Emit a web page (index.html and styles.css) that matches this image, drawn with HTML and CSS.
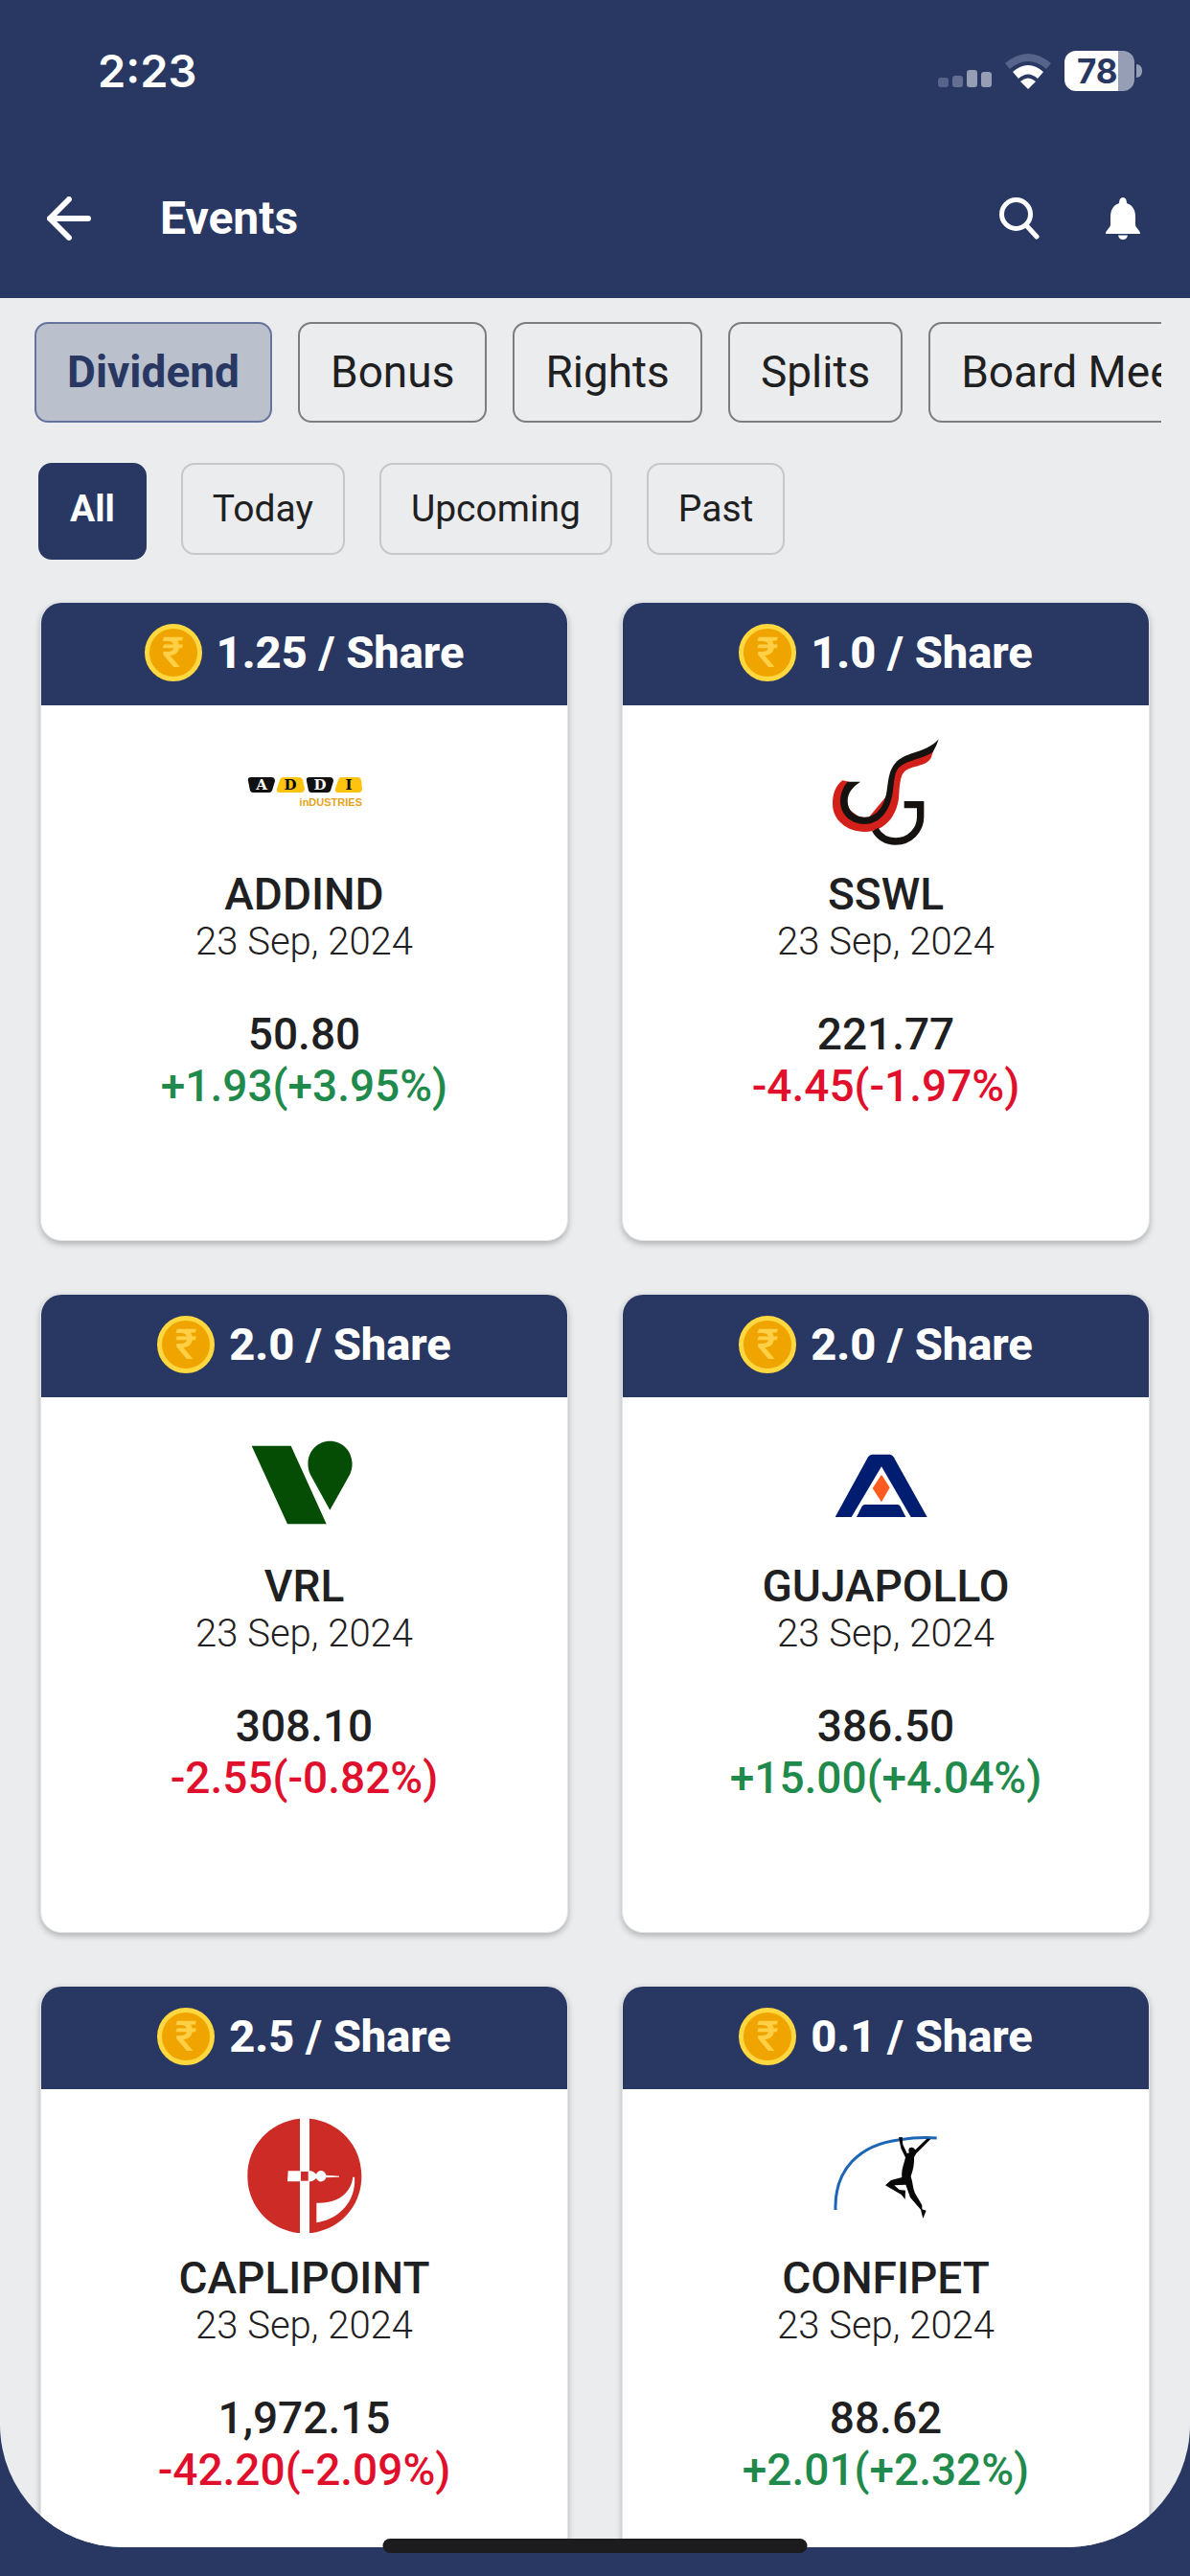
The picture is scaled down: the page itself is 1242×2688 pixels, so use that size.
FILE: index.html
```html
<!DOCTYPE html>
<html lang="en">
<head>
<meta charset="utf-8">
<meta name="viewport" content="width=device-width, initial-scale=1">
<title>Events</title>
<link rel="stylesheet" href="styles.css">
</head>
<body>
<div class="app">
  <header class="top">
    <div class="status">
      <span class="clock">2:23</span>
      <div class="indicators">
        <svg class="signal" viewBox="0 0 56 18" width="56" height="18" aria-hidden="true">
          <rect x="0" y="8" width="11" height="10" rx="3" fill="#56638a"/>
          <rect x="15" y="6" width="11" height="12" rx="3" fill="#646f92"/>
          <rect x="30" y="0" width="11" height="18" rx="3" fill="#969eb5"/>
          <rect x="45" y="2" width="11" height="16" rx="3" fill="#969eb5"/>
        </svg>
        <svg class="wifi" viewBox="0 0 48 37" width="48" height="37" aria-hidden="true">
          <path d="M0 10Q24 -10 48 10L43 16Q24 0 5 16Z" fill="#56638a"/>
          <path d="M8 19Q24 5 40 19L34 26Q24 17 14 26Z" fill="#fff"/>
          <path d="M16 29Q24 22 32 29L24 37Z" fill="#fff"/>
        </svg>
        <span class="battery"><span class="battery-level">78</span></span>
      </div>
    </div>
    <nav class="bar">
      <button class="icon-button" type="button" aria-label="Back">
        <svg viewBox="0 0 46 46" width="46" height="46"><path d="M43 23H3M23 3L3 23L23 43" fill="none" stroke="#fff" stroke-width="6" stroke-linecap="round" stroke-linejoin="round"/></svg>
      </button>
      <h1>Events</h1>
      <button class="icon-button" type="button" aria-label="Search">
        <svg viewBox="0 0 42 44" width="42" height="44"><circle cx="17.5" cy="17.5" r="15" fill="none" stroke="#fff" stroke-width="5"/><path d="M28 29L39 41" stroke="#fff" stroke-width="5" stroke-linecap="round"/></svg>
      </button>
      <button class="icon-button bell" type="button" aria-label="Notifications">
        <svg viewBox="0 0 36 44" width="36" height="44"><path d="M18 0C20.500 0 22 2 22 6C28 8 31 13 31 20V28C31 32 36 34 36 38H0C0 34 5 32 5 28V20C5 13 8 8 14 6C14 2 15.500 0 18 0ZM13 39.500H23Q22 44 18 44T13 39.500Z" fill="#fff"/></svg>
      </button>
    </nav>
  </header>

  <main class="content">
    <div class="tabs">
      <button class="tab selected" type="button">Dividend</button>
      <button class="tab" type="button">Bonus</button>
      <button class="tab" type="button">Rights</button>
      <button class="tab" type="button">Splits</button>
      <button class="tab" type="button">Board Meeting</button>
    </div>
    <div class="filters">
      <button class="filter active" type="button">All</button>
      <button class="filter" type="button">Today</button>
      <button class="filter" type="button">Upcoming</button>
      <button class="filter" type="button">Past</button>
    </div>

    <section class="grid">
      <article class="card">
        <div class="payout"><span class="coin">₹</span>1.25 / Share</div>
        <div class="details">
          <svg class="logo" viewBox="0 0 120 120" role="img" aria-label="Addi Industries">
            <path d="M4 45H25Q29 45 29 49L26 59Q25 61 23 61H6Q4 61 3 59L1 49Q0 45 4 45ZM65 45H86Q90 45 90 49L87 59Q86 61 84 61H67Q65 61 64 59L62 49Q61 45 65 45Z" fill="#111"/>
            <path d="M37 45H54Q57 45 58 48L60 57Q60 61 56 61H34Q30 61 31 57L34 48Q35 45 37 45ZM98 45H115Q118 45 119 48L120 57Q120 61 116 61H95Q91 61 92 57L95 48Q96 45 98 45Z" fill="#ffc20e"/>
            <g class="tile-letter"><text x="15" y="58" fill="#fff">A</text><text x="45" y="58">D</text><text x="76" y="58" fill="#fff">D</text><text x="106" y="58">I</text></g>
            <text class="logo-name" x="120" y="75">inDUSTRIES</text>
          </svg>
          <h2>ADDIND</h2>
          <time datetime="2024-09-23">23 Sep, 2024</time>
          <span class="price">50.80</span>
          <span class="change up">+1.93(+3.95%)</span>
        </div>
      </article>

      <article class="card">
        <div class="payout"><span class="coin">₹</span>1.0 / Share</div>
        <div class="details">
          <svg class="logo" viewBox="45 45 360 360" role="img" aria-label="SSWL">
            <path d="M88 190C66 206 57 233 57 265C57 315 103 351 158 351C218 351 256 305 264 247C267 205 268 175 282 163C303 141 346 150 365 120L372 98L280 120L240 160L225 240L160 318L92 270L108 194Z" fill="#d3201a"/>
            <path d="M104 194H144C119 211 104 229 104 255C104 284 127 305 157 305C196 305 218 270 226 228C232 190 232 158 256 133C287 100 352 104 389 61C384 76 380 86 371 101C343 121 292 125 265 149C246 169 251 208 242 244C231 292 201 327 157 327C112 327 81 295 81 256C81 230 91 209 104 194Z" fill="#15120f"/>
            <path d="M190 344C204 368 227 381 254 381C299 381 332 346 332 304V266H281" fill="none" stroke="#15120f" stroke-width="22"/>
          </svg>
          <h2>SSWL</h2>
          <time datetime="2024-09-23">23 Sep, 2024</time>
          <span class="price">221.77</span>
          <span class="change down">-4.45(-1.97%)</span>
        </div>
      </article>

      <article class="card">
        <div class="payout"><span class="coin">₹</span>2.0 / Share</div>
        <div class="details">
          <svg class="logo" viewBox="54 21 360 360" role="img" aria-label="VRL">
            <path d="M68 83H191L302 328H180ZM313 284L251 172C229 119 264 68 313 68C363 68 398 119 376 172Z" fill="#054c05"/>
          </svg>
          <h2>VRL</h2>
          <time datetime="2024-09-23">23 Sep, 2024</time>
          <span class="price">308.10</span>
          <span class="change down">-2.55(-0.82%)</span>
        </div>
      </article>

      <article class="card">
        <div class="payout"><span class="coin">₹</span>2.0 / Share</div>
        <div class="details">
          <svg class="logo" viewBox="45 -9 360 360" role="img" aria-label="Gujarat Apollo">
            <path d="M65 276L168 88Q173 80 181 80H236Q243 80 248 88L353 276H302L210 118L116 276ZM132 276L149 242Q152 237 158 237H260Q266 237 269 242L286 276Z" fill="#001d72"/>
            <path d="M210 143L236 184L210 229L182 186Z" fill="#ff5a1f"/>
          </svg>
          <h2>GUJAPOLLO</h2>
          <time datetime="2024-09-23">23 Sep, 2024</time>
          <span class="price">386.50</span>
          <span class="change up">+15.00(+4.04%)</span>
        </div>
      </article>

      <article class="card">
        <div class="payout"><span class="coin">₹</span>2.5 / Share</div>
        <div class="details">
          <svg class="logo" viewBox="54 57 360 360" role="img" aria-label="Caplin Point">
            <path d="M219 59V418C125 408 55 335 55 239S125 69 219 59ZM249 59C343 69 412 143 412 239S343 408 249 418Z" fill="#cd2b26"/>
            <path d="M182 223H247C259 222 264 228 270 233C276 218 296 218 301 236L342 239V242L301 244C296 260 276 260 270 246C264 252 259 257 247 256H180ZM385 242H390C396 310 350 372 271 385V323C339 326 378 293 385 242Z" fill="#fff"/>
            <rect x="222" y="225" width="23" height="29" fill="#cd2b26"/>
          </svg>
          <h2>CAPLIPOINT</h2>
          <time datetime="2024-09-23">23 Sep, 2024</time>
          <span class="price">1,972.15</span>
          <span class="change down">-42.20(-2.09%)</span>
        </div>
      </article>

      <article class="card">
        <div class="payout"><span class="coin">₹</span>0.1 / Share</div>
        <div class="details">
          <svg class="logo" viewBox="45 27 360 360" role="img" aria-label="Confidence Petroleum">
            <path d="M66 315C62 190 140 110 268 95Q325 86 383 90" fill="none" stroke="#1b66b5" stroke-width="9"/>
            <path d="M264 88L275 87L277 110L290 138L297 136C292 126 297 118 305 119C313 120 314 125 316 127L352 92L364 93L319 138L312 150C313 178 307 195 302 210C309 232 308 252 318 268L337 300L337 313L350 317L340 342L333 314L300 276L286 236L250 238L266 252L285 254L284 282L272 267L222 238L240 222L274 213C271 190 281 170 285 151L271 122Z" fill="#080808"/>
          </svg>
          <h2>CONFIPET</h2>
          <time datetime="2024-09-23">23 Sep, 2024</time>
          <span class="price">88.62</span>
          <span class="change up">+2.01(+2.32%)</span>
        </div>
      </article>
    </section>
  </main>
  <div class="home-indicator"></div>
</div>
</body>
</html>
```
FILE: styles.css
```css
:root {
  --navy: #283862;
  --surface: #ebecee;
  --ink: #1f2021;
  --up: #1f8a4c;
  --down: #e0102d;
}

* { box-sizing: border-box; }

body {
  margin: 0;
  background: var(--navy);
  color: var(--ink);
  font-family: Roboto, "Liberation Sans", sans-serif;
}

button {
  margin: 0;
  font-family: inherit;
  color: inherit;
  cursor: pointer;
}

svg { display: block; }

.app {
  position: relative;
  display: flex;
  flex-direction: column;
  height: 100vh;
  padding-bottom: 30px;
}

/* Status bar and title bar */
.top { color: #fff; }

.status {
  display: flex;
  align-items: center;
  justify-content: space-between;
  height: 148px;
  padding: 0 50px 0 102px;
}

.clock {
  font: 600 47px/56px Inter, sans-serif;
}

.indicators {
  display: flex;
  align-items: center;
  gap: 14px;
}

.signal { align-self: flex-end; margin-bottom: 4px; }

.battery {
  position: relative;
  width: 73px;
  height: 42px;
  margin-right: 8px;
  border-radius: 12px;
  background: linear-gradient(90deg, #fff 77%, #969eb5 77%);
  color: var(--navy);
}

.battery::after {
  content: "";
  position: absolute;
  top: 14px;
  right: -8px;
  width: 6px;
  height: 14px;
  border-radius: 0 6px 6px 0;
  background: #969eb5;
}

.battery-level {
  display: block;
  padding-left: 13px;
  font: 700 35px/42px Inter, sans-serif;
}

.bar {
  display: flex;
  align-items: center;
  height: 163px;
  padding: 0 52px 3px 49px;
}

.bar h1 {
  flex: 1;
  margin: 0 0 0 72px;
  font-size: 48px;
  line-height: 56px;
  font-weight: 700;
}

.icon-button {
  padding: 0;
  border: 0;
  background: none;
}

.bell { margin-left: 69px; }

/* Scrolling content */
.content {
  flex: 1;
  min-height: 0;
  overflow: hidden;
  padding-top: 25px;
  border-radius: 0 0 128px 128px;
  background: var(--surface);
}

.tabs {
  display: flex;
  gap: 27px;
  margin: 0 30px 0 36px;
  overflow: hidden;
}

.tab {
  flex: none;
  height: 105px;
  padding: 0 32px 2px;
  border: 2px solid #7c7d7f;
  border-radius: 14px;
  background: none;
  font-size: 46px;
  line-height: 54px;
  white-space: nowrap;
}

.tab.selected {
  border-color: #66749b;
  background: #bbc0cd;
  color: var(--navy);
  font-weight: 700;
}

.filters {
  display: flex;
  align-items: flex-start;
  gap: 36px;
  padding: 42px 40px 44px;
}

.filter {
  padding: 24px 31px;
  border: 2px solid #c6c7c9;
  border-radius: 14px;
  background: none;
  font-size: 39px;
  line-height: 44px;
}

.filter.active {
  padding-bottom: 29px;
  border-color: var(--navy);
  background: var(--navy);
  color: #fff;
  font-weight: 700;
}

/* Event cards */
.grid {
  display: grid;
  grid-template-columns: 1fr 1fr;
  gap: 55px 56px;
  padding: 0 42px;
}

.card {
  overflow: hidden;
  border: 1px solid #e2e4e8;
  border-radius: 22px;
  background: #fff;
  box-shadow: 0 3px 6px rgba(0, 0, 0, 0.25);
}

.payout {
  display: flex;
  align-items: center;
  justify-content: center;
  gap: 15px;
  height: 107px;
  padding-bottom: 3px;
  background: var(--navy);
  color: #fff;
  font-size: 47px;
  line-height: 56px;
  font-weight: 800;
}

.coin {
  width: 60px;
  height: 60px;
  border: 5px solid #ffd83f;
  border-radius: 50%;
  background: #f0a400;
  color: #ffcf45;
  font-size: 44px;
  line-height: 50px;
  font-weight: 500;
  text-align: center;
}

.details {
  display: flex;
  flex-direction: column;
  align-items: center;
  padding: 30px 0 134px;
}

.logo {
  width: 120px;
  height: 120px;
}

.tile-letter {
  font: 700 15px "DejaVu Serif", serif;
  text-anchor: middle;
}

.logo-name {
  fill: #e8a317;
  font: 700 11px "Liberation Sans", sans-serif;
  text-anchor: end;
}

.details h2 {
  margin: 20px 0 0;
  font-size: 46px;
  line-height: 54px;
  font-weight: 500;
}

.details time {
  font-size: 40px;
  line-height: 46px;
  font-weight: 300;
}

.price {
  margin-top: 46px;
  font-size: 46px;
  line-height: 54px;
  font-weight: 500;
}

.change {
  font-size: 46px;
  line-height: 54px;
  font-weight: 500;
}

.up { color: var(--up); }
.down { color: var(--down); }

.home-indicator {
  position: absolute;
  bottom: 24px;
  left: 50%;
  width: 443px;
  height: 15px;
  border-radius: 8px;
  background: #1c1c1e;
  transform: translateX(-50%);
}
```
